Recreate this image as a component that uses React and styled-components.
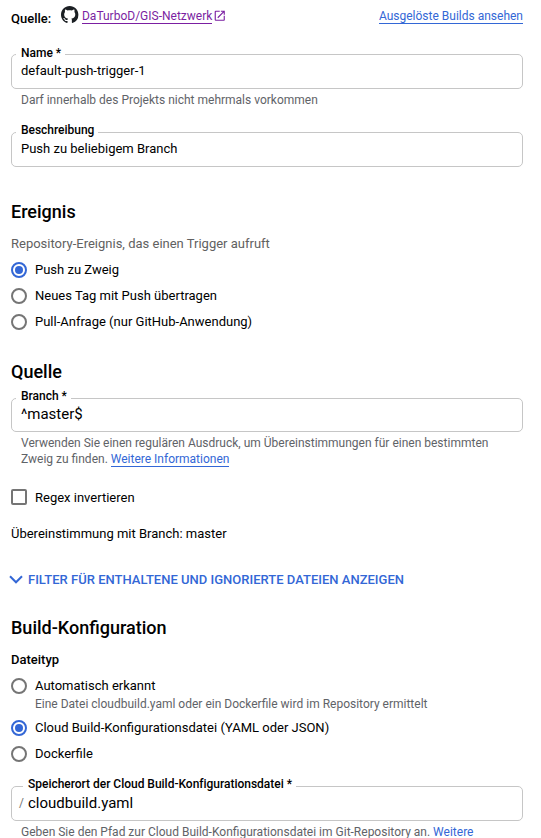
import React from "react";
import styled, { createGlobalStyle } from "styled-components";

const GlobalStyle = createGlobalStyle`
  *, *::before, *::after { box-sizing: border-box; }
  body {
    margin: 0;
    background: #fff;
    color: #000;
    font: 400 13px/20px Roboto, sans-serif;
  }
`;

const Page = styled.main`
  display: flex;
  flex-direction: column;
  height: 838px;
  padding: 5px 18px 0 11px;
  overflow: hidden;
`;

const TopBar = styled.header`
  display: flex;
  flex: none;
  align-items: flex-start;
  justify-content: space-between;
  height: 49px;
`;

const Source = styled.div`
  display: flex;
  align-items: flex-start;
`;

const SourceLabel = styled.span`
  width: 50.3px;
  padding-top: 4px;
  font-weight: 500;
`;

const GithubMark = styled.svg`
  width: 17.4px;
  height: 17.4px;
  margin-top: 1px;
  margin-right: 3.3px;
  fill: #1b1f23;
`;

const Link = styled.a`
  display: inline-block;
  height: ${(p) => p.$height || 16}px;
  border-bottom: 1px solid currentColor;
  color: ${(p) => (p.$visited ? "#7b1fa2" : "#3367d6")};
  font-size: 12px;
  line-height: 16px;
  text-decoration: none;
  white-space: nowrap;
`;

const TopLink = styled(Link)`
  height: 16px;
  margin-top: 3px;
`;

const ExternalIcon = styled.svg`
  width: 13.5px;
  height: 13.5px;
  margin-top: 4px;
  margin-left: 1px;
  fill: #7b1fa2;
`;

const Field = styled.div`
  position: relative;
  display: flex;
  flex: none;
  height: ${(p) => p.$height || 35}px;
  padding: ${(p) => p.$inset || 6}px 9px 0;
  border: 1px solid #c6c6c6;
  border-radius: 5px;
`;

const FieldLabel = styled.label`
  position: absolute;
  top: ${(p) => p.$top || -11}px;
  left: ${(p) => p.$left || 4}px;
  padding: 0 4px 0 5px;
  background: #fff;
  font-size: 12px;
  font-weight: 500;
  letter-spacing: -0.02px;
  line-height: 16px;
  white-space: nowrap;
`;

const Value = styled.span`
  font-size: ${(p) => (p.$large ? 15 : 13)}px;
  line-height: 20px;
`;

const Prefix = styled.span`
  width: 9px;
  margin-left: -2px;
  color: #757575;
  font-size: 12px;
  line-height: 20px;
`;

const Helper = styled.p`
  flex: none;
  height: ${(p) => p.$height}px;
  margin: ${(p) => p.$top || 0}px 0 0;
  padding-left: ${(p) => p.$indent || 10}px;
  color: #5f6368;
  font-size: 12px;
  line-height: 16px;
  white-space: nowrap;
`;

const OptionHint = styled(Helper)`
  margin: -3px 0 3px;
`;

const Heading = styled.h2`
  flex: none;
  margin: ${(p) => p.$top}px 0 0;
  font-size: 18px;
  font-weight: 500;
  line-height: 24px;
`;

const Paragraph = styled.p`
  flex: none;
  margin: ${(p) => p.$top}px 0 0;
  color: ${(p) => (p.$muted ? "#616161" : "#000")};
  font-weight: ${(p) => (p.$strong ? 500 : 400)};
  line-height: 20px;
`;

const Options = styled.div`
  display: flex;
  flex: none;
  flex-direction: column;
  margin-top: ${(p) => p.$top}px;
`;

const Option = styled.label`
  display: flex;
  align-items: center;
  gap: 8px;
  height: 26px;
`;

const Radio = styled.span`
  display: grid;
  place-items: center;
  width: 16px;
  height: 16px;
  border: 2px solid ${(p) => (p.$checked ? "#3367d6" : "#757575")};
  border-radius: 50%;

  &::after {
    content: "";
    width: 8px;
    height: 8px;
    border-radius: 50%;
    background: ${(p) => (p.$checked ? "#3367d6" : "transparent")};
  }
`;

const Checkbox = styled.span`
  width: 16px;
  height: 16px;
  border: 2px solid #757575;
  border-radius: 2px;
`;

const CheckRow = styled(Option)`
  flex: none;
  margin-top: 17px;
`;

const CheckText = styled.span`
  padding-top: 2px;
`;

const Toggle = styled.button`
  display: flex;
  flex: none;
  align-items: center;
  gap: 5px;
  height: 20px;
  margin: 26px 0 0 -2px;
  padding: 0;
  border: 0;
  background: none;
  color: #3367d6;
  font: 500 13px/20px Roboto, sans-serif;
  letter-spacing: 0.01px;
  white-space: nowrap;
`;

const Chevron = styled.svg`
  width: 14px;
  height: 9px;
  margin-bottom: 2px;
  fill: none;
  stroke: currentColor;
  stroke-width: 2;
`;

function RadioOption({ checked, children }) {
  return (
    <Option>
      <Radio $checked={checked} role="radio" aria-checked={!!checked} />
      <span>{children}</span>
    </Option>
  );
}

export default function App() {
  return (
    <>
      <GlobalStyle />
      <Page>
        <TopBar>
          <Source>
            <SourceLabel>Quelle:</SourceLabel>
            <GithubMark viewBox="0 0 16 16">
              <path d="M8 0C3.58 0 0 3.58 0 8c0 3.54 2.29 6.53 5.47 7.59.4.07.55-.17.55-.38 0-.19-.01-.82-.01-1.49-2.01.37-2.53-.49-2.69-.94-.09-.23-.48-.94-.82-1.13-.28-.15-.68-.52-.01-.53.63-.01 1.08.58 1.23.82.72 1.21 1.87.87 2.33.66.07-.52.28-.87.51-1.07-1.78-.2-3.64-.89-3.64-3.95 0-.87.31-1.59.82-2.15-.08-.2-.36-1.02.08-2.12 0 0 .67-.21 2.2.82.64-.18 1.32-.27 2-.27s1.36.09 2 .27c1.53-1.04 2.2-.82 2.2-.82.44 1.1.16 1.92.08 2.12.51.56.82 1.27.82 2.15 0 3.07-1.87 3.75-3.65 3.95.29.25.54.73.54 1.48 0 1.07-.01 1.93-.01 2.2 0 .21.15.46.55.38A8.01 8.01 0 0 0 16 8c0-4.42-3.58-8-8-8z" />
            </GithubMark>
            <TopLink $visited>DaTurboD/GIS-Netzwerk</TopLink>
            <ExternalIcon viewBox="0 0 24 24">
              <path d="M19 19H5V5h7V3H5a2 2 0 0 0-2 2v14a2 2 0 0 0 2 2h14c1.1 0 2-.9 2-2v-7h-2v7zM14 3v2h3.59l-9.83 9.83 1.41 1.41L19 6.41V10h2V3h-7z" />
            </ExternalIcon>
          </Source>
          <TopLink>Ausgelöste Builds ansehen</TopLink>
        </TopBar>

        <Field>
          <FieldLabel $top={-10}>Name *</FieldLabel>
          <Value>default-push-trigger-1</Value>
        </Field>
        <Helper $top={3} $height={40}>
          Darf innerhalb des Projekts nicht mehrmals vorkommen
        </Helper>
        <Field>
          <FieldLabel>Beschreibung</FieldLabel>
          <Value>Push zu beliebigem Branch</Value>
        </Field>

        <Heading $top={33}>Ereignis</Heading>
        <Paragraph $top={10} $muted>
          Repository-Ereignis, das einen Trigger aufruft
        </Paragraph>
        <Options $top={3} role="radiogroup">
          <RadioOption checked>Push zu Zweig</RadioOption>
          <RadioOption>Neues Tag mit Push übertragen</RadioOption>
          <RadioOption>Pull-Anfrage (nur GitHub-Anwendung)</RadioOption>
        </Options>

        <Heading $top={25}>Quelle</Heading>
        <Options $top={14}>
          <Field $height={34} $inset={5}>
            <FieldLabel>Branch *</FieldLabel>
            <Value $large>^master$</Value>
          </Field>
        </Options>
        <Helper $top={3} $height={32}>
          Verwenden Sie einen regulären Ausdruck, um Übereinstimmungen für einen bestimmten
          <br />
          Zweig zu finden. <Link>Weitere Informationen</Link>
        </Helper>
        <CheckRow>
          <Checkbox role="checkbox" aria-checked="false" />
          <CheckText>Regex invertieren</CheckText>
        </CheckRow>
        <Paragraph $top={14}>Übereinstimmung mit Branch: master</Paragraph>
        <Toggle>
          <Chevron viewBox="0 0 14 9">
            <path d="M1 1.3l6 6 6-6" />
          </Chevron>
          FILTER FÜR ENTHALTENE UND IGNORIERTE DATEIEN ANZEIGEN
        </Toggle>

        <Heading $top={26}>Build-Konfiguration</Heading>
        <Paragraph $top={10} $strong>
          Dateityp
        </Paragraph>
        <Options $top={3} role="radiogroup">
          <RadioOption>Automatisch erkannt</RadioOption>
          <OptionHint $indent={24} $height={16}>
            Eine Datei cloudbuild.yaml oder ein Dockerfile wird im Repository ermittelt
          </OptionHint>
          <RadioOption checked>Cloud Build-Konfigurationsdatei (YAML oder JSON)</RadioOption>
          <RadioOption>Dockerfile</RadioOption>
        </Options>
        <Options $top={19}>
          <Field>
            <FieldLabel $left={11}>Speicherort der Cloud Build-Konfigurationsdatei *</FieldLabel>
            <Prefix>/</Prefix>
            <Value $large>cloudbuild.yaml</Value>
          </Field>
        </Options>
        <Helper $top={3} $height={16}>
          Geben Sie den Pfad zur Cloud Build-Konfigurationsdatei im Git-Repository an.{" "}
          <Link $height={17}>Weitere</Link>
        </Helper>
      </Page>
    </>
  );
}
